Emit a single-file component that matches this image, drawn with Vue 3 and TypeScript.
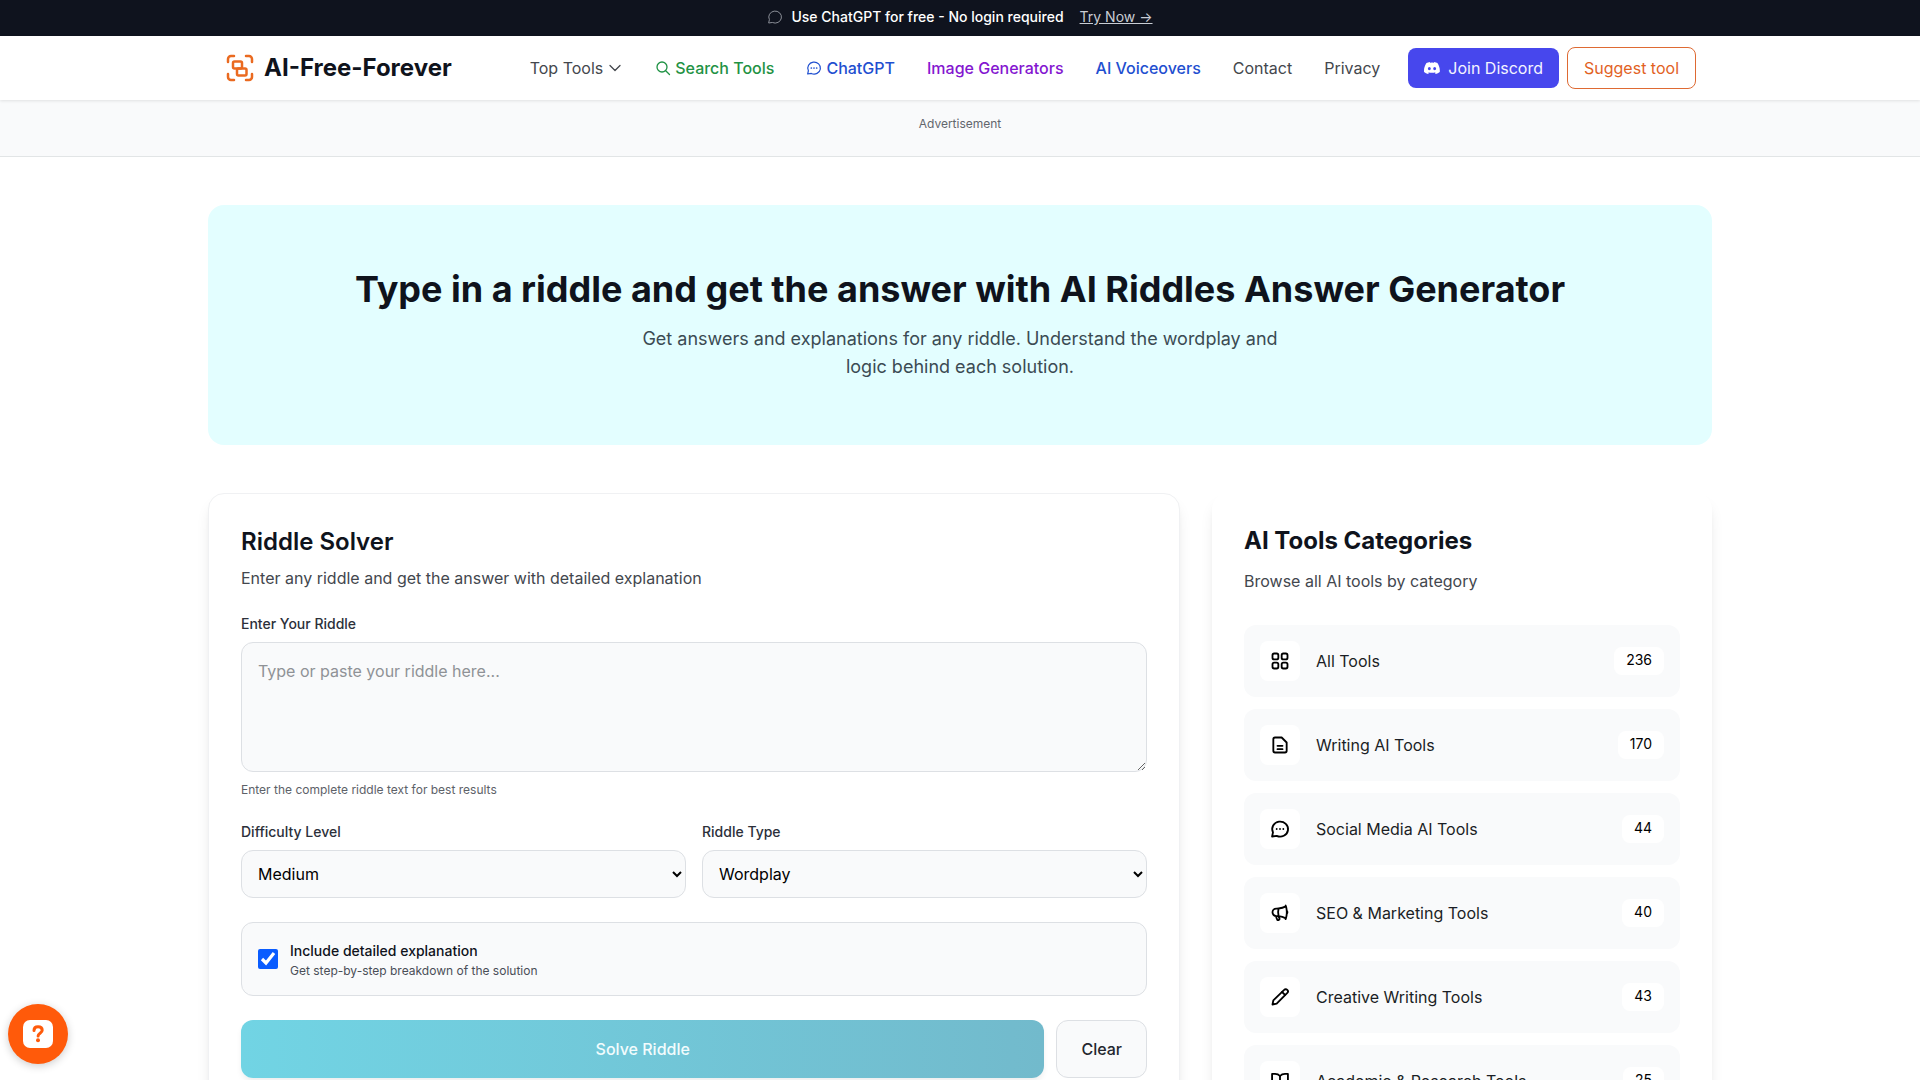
<script setup lang="ts">
import { ref } from 'vue'

interface Category {
  name: string
  count: number
  icon: string[]
}

const riddle = ref('')
const difficulty = ref('Medium')
const riddleType = ref('Wordplay')
const detailed = ref(true)

const difficulties = ['Easy', 'Medium', 'Hard']
const riddleTypes = ['Wordplay', 'Logic', 'Math', 'Mystery']

const bubble = 'M2.5 21l1.1-5A9.5 9 0 1 1 8 20.2Z'
const dots = ['M8 12h.01', 'M12 12h.01', 'M16 12h.01']

const categories: Category[] = [
  {
    name: 'All Tools',
    count: 236,
    icon: [
      'M5 3h3a2 2 0 0 1 2 2v3a2 2 0 0 1-2 2H5a2 2 0 0 1-2-2V5a2 2 0 0 1 2-2Z',
      'M16 3h3a2 2 0 0 1 2 2v3a2 2 0 0 1-2 2h-3a2 2 0 0 1-2-2V5a2 2 0 0 1 2-2Z',
      'M5 14h3a2 2 0 0 1 2 2v3a2 2 0 0 1-2 2H5a2 2 0 0 1-2-2v-3a2 2 0 0 1 2-2Z',
      'M16 14h3a2 2 0 0 1 2 2v3a2 2 0 0 1-2 2h-3a2 2 0 0 1-2-2v-3a2 2 0 0 1 2-2Z',
    ],
  },
  {
    name: 'Writing AI Tools',
    count: 170,
    icon: ['M6 3h8l6 6v10a2 2 0 0 1-2 2H6a2 2 0 0 1-2-2V5a2 2 0 0 1 2-2Z', 'M9 13h6', 'M9 17h6'],
  },
  {
    name: 'Social Media AI Tools',
    count: 44,
    icon: [bubble, ...dots],
  },
  {
    name: 'SEO & Marketing Tools',
    count: 40,
    icon: [
      'M10.3 15.8c-.7-.1-1.4-.1-2.1-.1H7.5a4.5 4.5 0 1 1 0-9h.7c.7 0 1.4 0 2.1-.1m0 9.2c.3 1 .6 1.9 1 2.8.3.5.1 1.200-.5 1.500l-.6.4c-.6.3-1.3.1-1.500-.5a18 18 0 0 1-1.500-4.3m3.1.1a18 18 0 0 1 0-9.200m0 9.200a24 24 0 0 1 8.8 2.600m-8.800-11.800a24 24 0 0 0 8.800-2.600m0 14.400-.4 1m.4-1a24 24 0 0 0 1-5.400m-1-9-.4-1m.4 1a24 24 0 0 1 1 5.400m0 3.600c.5-.4.8-1.100.8-1.800s-.3-1.400-.8-1.800m0 3.600a24 24 0 0 0 0-3.600',
    ],
  },
  {
    name: 'Creative Writing Tools',
    count: 43,
    icon: ['M17 3.500a2.500 2.500 0 0 1 3.800 3.600L8 20l-5 1 1-5Z', 'M14.500 6l3.500 3.500'],
  },
  {
    name: 'Academic & Research Tools',
    count: 25,
    icon: ['M12 6v15', 'M12 6c-1.500-1.700-3.500-2.500-6-2.500H2.500v15H6c2.500 0 4.500.8 6 2.500 1.500-1.700 3.500-2.500 6-2.500h3.500v-15H18c-2.500 0-4.500.8-6 2.500Z'],
  },
]
</script>

<template>
  <div class="page">
    <div class="announcement">
      <svg class="announcement-icon" viewBox="0 0 24 24" aria-hidden="true"><path :d="bubble" /></svg>
      <span>Use ChatGPT for free - No login required</span>
      <a href="#">Try Now →</a>
    </div>

    <header class="header">
      <div class="container header-inner">
        <a class="brand" href="#">
          <svg viewBox="0 0 28 28" aria-hidden="true">
            <path d="M2 8V5a3 3 0 0 1 3-3h3M20 2h3a3 3 0 0 1 3 3v3M26 20v3a3 3 0 0 1-3 3h-3M8 26H5a3 3 0 0 1-3-3v-3" />
            <rect x="7" y="7.5" width="9" height="7" rx="1.5" />
            <rect x="11" y="14.5" width="9.5" height="7" rx="1.5" />
          </svg>
          <span>AI-Free-Forever</span>
        </a>
        <nav class="nav">
          <a href="#">Top Tools
            <svg viewBox="0 0 16 16" aria-hidden="true"><path d="M3 5.500l5 5 5-5" /></svg>
          </a>
          <a class="green" href="#">
            <svg viewBox="0 0 16 16" aria-hidden="true"><circle cx="7" cy="7" r="5" /><path d="M10.700 10.700l3.800 3.800" /></svg>Search Tools</a>
          <a class="blue" href="#">
            <svg viewBox="0 0 24 24" class="chat" aria-hidden="true"><path :d="bubble" /><path v-for="d in dots" :key="d" class="dot" :d="d" /></svg>ChatGPT</a>
          <a class="purple" href="#">Image Generators</a>
          <a class="blue" href="#">AI Voiceovers</a>
          <a href="#">Contact</a>
          <a href="#">Privacy</a>
        </nav>
        <div class="actions">
          <a class="discord" href="#">
            <svg viewBox="0 0 24 24" aria-hidden="true">
              <path d="M20.317 4.370a19.800 19.800 0 0 0-4.885-1.515c-.21.375-.45.880-.617 1.280a18.300 18.300 0 0 0-5.630 0c-.17-.4-.41-.9-.62-1.280A19.700 19.700 0 0 0 3.680 4.370C.53 9.050-.32 13.600.1 18.080a19.900 19.900 0 0 0 6 3.030c.48-.66.900-1.360 1.260-2.100-.65-.24-1.270-.54-1.860-.890l.37-.29c3.920 1.790 8.180 1.790 12.060 0l.37.290c-.6.350-1.220.650-1.870.890.360.740.780 1.440 1.230 2.100a19.800 19.800 0 0 0 6-3.030c.5-5.180-.84-9.680-3.550-13.660ZM8.020 15.330c-1.180 0-2.160-1.080-2.160-2.420s.96-2.420 2.160-2.420c1.210 0 2.180 1.100 2.160 2.420 0 1.340-.96 2.420-2.160 2.420Zm7.970 0c-1.180 0-2.160-1.080-2.160-2.420s.96-2.420 2.160-2.420c1.210 0 2.180 1.100 2.160 2.420 0 1.340-.95 2.420-2.160 2.420Z" />
            </svg>
            Join Discord
          </a>
          <a class="suggest" href="#">Suggest tool</a>
        </div>
      </div>
    </header>

    <aside class="ad">Advertisement</aside>

    <main class="container main">
      <section class="hero">
        <h1>Type in a riddle and get the answer with AI Riddles Answer Generator</h1>
        <p>Get answers and explanations for any riddle. Understand the wordplay and logic behind each solution.</p>
      </section>

      <div class="columns">
        <section class="card solver">
          <h2>Riddle Solver</h2>
          <p class="lead">Enter any riddle and get the answer with detailed explanation</p>
          <form @submit.prevent>
            <div class="field">
              <label for="riddle">Enter Your Riddle</label>
              <textarea id="riddle" v-model="riddle" placeholder="Type or paste your riddle here..."></textarea>
              <p class="hint">Enter the complete riddle text for best results</p>
            </div>
            <div class="pair">
              <div class="field">
                <label for="difficulty">Difficulty Level</label>
                <select id="difficulty" v-model="difficulty">
                  <option v-for="d in difficulties" :key="d">{{ d }}</option>
                </select>
              </div>
              <div class="field">
                <label for="type">Riddle Type</label>
                <select id="type" v-model="riddleType">
                  <option v-for="t in riddleTypes" :key="t">{{ t }}</option>
                </select>
              </div>
            </div>
            <div class="option">
              <input id="detailed" v-model="detailed" type="checkbox" />
              <label for="detailed">
                <span class="option-title">Include detailed explanation</span>
                <span class="option-text">Get step-by-step breakdown of the solution</span>
              </label>
            </div>
            <div class="buttons">
              <button class="solve" type="submit" :disabled="!riddle">Solve Riddle</button>
              <button class="clear" type="button" @click="riddle = ''">Clear</button>
            </div>
          </form>
        </section>

        <aside class="card categories">
          <h2>AI Tools Categories</h2>
          <p class="lead">Browse all AI tools by category</p>
          <ul>
            <li v-for="c in categories" :key="c.name">
              <a href="#">
                <span class="tile">
                  <svg viewBox="0 0 24 24" aria-hidden="true"><path v-for="d in c.icon" :key="d" :d="d" /></svg>
                </span>
                <span class="name">{{ c.name }}</span>
                <span class="count">{{ c.count }}</span>
              </a>
            </li>
          </ul>
        </aside>
      </div>
    </main>

    <button class="help" type="button" aria-label="Help">
      <svg viewBox="0 0 30 28" aria-hidden="true">
        <rect width="30" height="28" rx="7" fill="#fff" />
        <path d="M11 10.500C11 8 12.600 6.800 15 6.800s4.200 1.300 4.200 3.500c0 2.900-4.100 3-4.100 5.700" fill="none" stroke="#ff5a0a" stroke-width="3" stroke-linecap="round" />
        <circle cx="15" cy="20.300" r="2" fill="#ff5a0a" />
      </svg>
    </button>
  </div>
</template>

<style>
body {
  margin: 0;
  background: #fff;
}
</style>

<style scoped>
.page,
.page * {
  box-sizing: border-box;
}

.page {
  font-family: Inter, "Liberation Sans", sans-serif;
  font-size: 16px;
  line-height: 24px;
  color: #0f131c;
}

h1,
h2,
p,
ul {
  margin: 0;
  padding: 0;
}

a {
  color: inherit;
  text-decoration: none;
}

svg {
  flex: none;
}

button,
textarea,
select {
  font: inherit;
}

.container {
  max-width: 1536px;
  margin: 0 auto;
  padding: 0 16px;
}

.announcement {
  display: flex;
  align-items: center;
  justify-content: center;
  height: 36px;
  padding-bottom: 2px;
  background: #0f131e;
  color: #fff;
  font-size: 14px;
  line-height: 20px;
  font-weight: 500;
}

.announcement-icon {
  width: 16px;
  height: 16px;
  margin-right: 8px;
  fill: none;
  stroke: #8b8f98;
  stroke-width: 1.5;
}

.announcement a {
  margin-left: 16px;
  color: #c9cdd4;
  font-weight: 400;
  text-decoration: underline;
}

.header {
  position: relative;
  background: #fff;
  box-shadow: 0 1px 3px rgba(0, 0, 0, 0.1);
}

.header-inner {
  display: flex;
  align-items: center;
  height: 64px;
  padding: 0 32px 0 34px;
}

.brand {
  display: flex;
  align-items: center;
  gap: 10px;
  margin-right: auto;
  font-size: 24px;
  line-height: 32px;
  font-weight: 700;
}

.brand svg {
  width: 28px;
  height: 28px;
  fill: none;
  stroke: #ea6a20;
  stroke-width: 2.5;
  stroke-linecap: round;
}

.nav {
  display: flex;
  align-items: center;
  gap: 32px;
  margin-right: 28px;
  color: #44474d;
}

.nav a {
  display: flex;
  align-items: center;
  gap: 4px;
  white-space: nowrap;
}

.nav svg {
  width: 16px;
  height: 16px;
  fill: none;
  stroke: currentColor;
  stroke-width: 1.3;
  stroke-linecap: round;
  stroke-linejoin: round;
}

.nav .chat {
  stroke-width: 1.8;
}

.nav .dot {
  stroke-width: 2.6;
}

.nav a.green,
.nav a.blue,
.nav a.purple {
  font-weight: 500;
}

.nav a.green {
  color: #1f9244;
}

.nav a.blue {
  color: #1f4fd0;
}

.nav a.purple {
  color: #8416d0;
}

.actions {
  display: flex;
  align-items: center;
  gap: 8px;
  white-space: nowrap;
}

.discord {
  display: flex;
  align-items: center;
  gap: 8px;
  padding: 8px 16px;
  border-radius: 8px;
  background: #4747ed;
  color: #f4f4ff;
}

.discord svg {
  width: 16px;
  height: 16px;
  fill: #fff;
}

.suggest {
  padding: 8px 16px;
  border: 1px solid #de6a33;
  border-radius: 8px;
  color: #e2621f;
}

.ad {
  padding: 16px 0 24px;
  border-bottom: 1px solid #e2e5e6;
  background: #f9fafb;
  color: #62666d;
  font-size: 12px;
  line-height: 16px;
  text-align: center;
}

.main {
  padding-top: 48px;
  padding-bottom: 48px;
}

.hero {
  padding: 64px 32px;
  border-radius: 16px;
  background: #e3feff;
  text-align: center;
}

.hero h1 {
  font-size: 36px;
  line-height: 40px;
  font-weight: 700;
}

.hero p {
  max-width: 672px;
  margin: 16px auto 0;
  color: #3b4b53;
  font-size: 18px;
  line-height: 28px;
}

.columns {
  display: grid;
  grid-template-columns: minmax(0, 1fr) 500px;
  align-items: start;
  gap: 32px;
  margin-top: 48px;
}

.card {
  padding: 32px;
  border-radius: 16px;
  background: #fff;
  box-shadow: 0 10px 15px -3px rgba(0, 0, 0, 0.1), 0 4px 6px -4px rgba(0, 0, 0, 0.1);
}

.card h2 {
  font-size: 24px;
  line-height: 32px;
}

.solver {
  border: 1px solid #f0f1f3;
}

.solver h2 {
  font-weight: 600;
}

.lead {
  color: #43474e;
}

.solver .lead {
  margin: 8px 0 24px;
}

form {
  display: flex;
  flex-direction: column;
  gap: 24px;
}

.field {
  display: flex;
  flex-direction: column;
}

.field label {
  margin-bottom: 8px;
  color: #2c303a;
  font-size: 14px;
  line-height: 20px;
  font-weight: 500;
}

textarea,
select {
  width: 100%;
  border: 1px solid #dde0e4;
  border-radius: 12px;
  background-color: #f9fafb;
  color: #000;
}

textarea {
  height: 130px;
  padding: 16px;
  resize: vertical;
}

textarea::placeholder {
  color: #8f9296;
}

.hint {
  margin-top: 10px;
  color: #5d6168;
  font-size: 12px;
  line-height: 16px;
}

.pair {
  display: grid;
  grid-template-columns: 1fr 1fr;
  gap: 16px;
}

select {
  height: 48px;
  padding: 0 12px;
}

.option {
  display: flex;
  align-items: center;
  gap: 12px;
  padding: 16px;
  border: 1px solid #dde0e4;
  border-radius: 12px;
  background: #f9fafb;
}

.option input {
  width: 20px;
  height: 20px;
  margin: 0;
  accent-color: #0a5cff;
}

.option label {
  display: flex;
  flex-direction: column;
  gap: 2px;
  padding-top: 2px;
}

.option-title {
  font-size: 14px;
  line-height: 20px;
  font-weight: 500;
}

.option-text {
  color: #4a4e57;
  font-size: 12px;
  line-height: 16px;
}

.buttons {
  display: flex;
  gap: 12px;
}

.solve,
.clear {
  height: 58px;
  border-radius: 12px;
  font-weight: 500;
}

.solve {
  flex: 1;
  border: 0;
  background: linear-gradient(90deg, #71d4e4, #72bacc);
  box-shadow: 0 4px 6px -1px rgba(0, 0, 0, 0.08);
  color: #f2fcfd;
}

.clear {
  padding: 0 24px;
  border: 1px solid #dde0e4;
  background: #f9fafb;
  color: #23272f;
}

.categories .lead {
  margin: 12px 0 32px;
}

.categories ul {
  display: flex;
  flex-direction: column;
  gap: 12px;
  list-style: none;
}

.categories a {
  display: flex;
  align-items: center;
  gap: 16px;
  height: 72px;
  padding: 0 16px;
  border-radius: 12px;
  background: #f9fafb;
}

.tile {
  display: grid;
  place-items: center;
  width: 40px;
  height: 40px;
  border-radius: 8px;
  background: #fff;
}

.tile svg {
  width: 20px;
  height: 20px;
  fill: none;
  stroke: #000;
  stroke-width: 2.2;
  stroke-linecap: round;
  stroke-linejoin: round;
}

.name {
  flex: 1;
  color: #1b1e25;
}

.count {
  padding: 3px 12px 5px;
  border-radius: 8px;
  background: #fff;
  color: #000;
  font-size: 14px;
  line-height: 20px;
}

.help {
  position: fixed;
  left: 8px;
  bottom: 16px;
  display: grid;
  place-items: center;
  width: 60px;
  height: 60px;
  padding: 0;
  border: 0;
  border-radius: 50%;
  background: #ff5a0a;
  box-shadow: 0 2px 8px rgba(0, 0, 0, 0.2);
}

.help svg {
  width: 30px;
  height: 28px;
}
</style>
